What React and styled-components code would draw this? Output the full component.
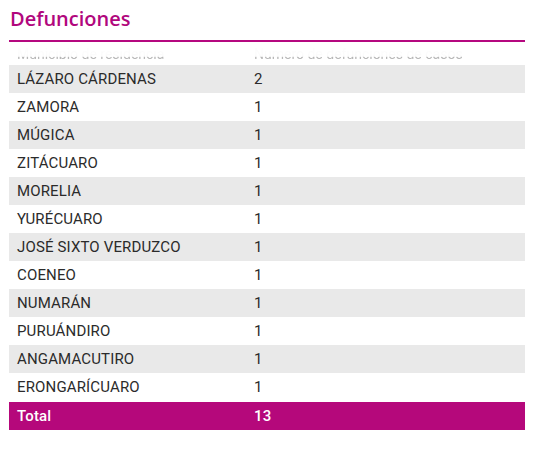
import React from "react";
import styled, { createGlobalStyle } from "styled-components";

const GlobalStyle = createGlobalStyle`
  body {
    margin: 0;
    background: #ffffff;
    font-family: Roboto, "Liberation Sans", sans-serif;
  }
`;

const rows = [
  ["LÁZARO CÁRDENAS", 2],
  ["ZAMORA", 1],
  ["MÚGICA", 1],
  ["ZITÁCUARO", 1],
  ["MORELIA", 1],
  ["YURÉCUARO", 1],
  ["JOSÉ SIXTO VERDUZCO", 1],
  ["COENEO", 1],
  ["NUMARÁN", 1],
  ["PURUÁNDIRO", 1],
  ["ANGAMACUTIRO", 1],
  ["ERONGARÍCUARO", 1],
];

function App() {
  const total = rows.reduce((s, r) => s + r[1], 0);
  return (
    <Wrapper>
      <GlobalStyle />
      <Title>Defunciones</Title>
      <HeadRow>
        <HeadCell>Municipio de residencia</HeadCell>
        <HeadCell>Numero de defunciones de casos</HeadCell>
      </HeadRow>
      <Table>
        {rows.map(([name, n], i) => (
          <Row key={name} $striped={i % 2 === 0}>
            <Cell>{name}</Cell>
            <Cell>{n}</Cell>
          </Row>
        ))}
        <TotalRow>
          <Cell>Total</Cell>
          <Cell>{total}</Cell>
        </TotalRow>
      </Table>
    </Wrapper>
  );
}

const Wrapper = styled.div`
  padding: 0 13px 0 9px;
`;

const Title = styled.h2`
  margin: 0;
  padding: 7px 0 9px 1px;
  font-family: "Open Sans", "Noto Sans", sans-serif;
  font-weight: 600;
  font-size: 20px;
  line-height: 24px;
  color: #b1077d;
  border-bottom: 2px solid #b5087f;
`;

/* header sits under a white fade, only the foot of the letters shows */
const HeadRow = styled.div`
  display: grid;
  grid-template-columns: 237px 1fr;
  height: 23px;
  padding-top: 4px;
  box-sizing: border-box;
  overflow: hidden;
  -webkit-mask-image: linear-gradient(
    to bottom,
    rgba(0, 0, 0, 0) 0,
    rgba(0, 0, 0, 0.03) 62%,
    rgba(0, 0, 0, 0.75) 70%,
    rgba(0, 0, 0, 0) 75%
  );
  mask-image: linear-gradient(
    to bottom,
    rgba(0, 0, 0, 0) 0,
    rgba(0, 0, 0, 0.03) 62%,
    rgba(0, 0, 0, 0.75) 70%,
    rgba(0, 0, 0, 0) 75%
  );
`;

const HeadCell = styled.div`
  padding: 0 8px;
  font-size: 14px;
  line-height: 16px;
  color: #6e6e6e;
  white-space: nowrap;
`;

const Table = styled.div`
  display: flex;
  flex-direction: column;
`;

const Row = styled.div`
  display: grid;
  grid-template-columns: 237px 1fr;
  height: 28px;
  align-items: center;
  background: ${(p) => (p.$striped ? "#e9e9e9" : "#ffffff")};
  color: #2b2b2b;
  font-size: 15px;
  letter-spacing: 0.15px;
`;

const TotalRow = styled(Row)`
  background: #b5087b;
  color: #ffffff;
  font-weight: 500;
  margin-top: 1px;
`;

const Cell = styled.div`
  padding: 0 8px;
`;

export default App;
